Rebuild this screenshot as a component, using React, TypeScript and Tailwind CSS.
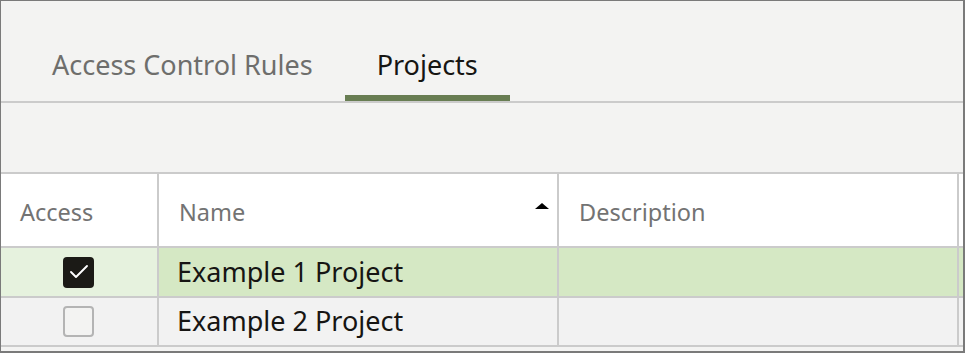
import { Check } from "lucide-react";

const rows = [
  { id: 1, name: "Example 1 Project", description: "", access: true },
  { id: 2, name: "Example 2 Project", description: "", access: false },
];

const tabs = [
  { id: "rules", label: "Access Control Rules", active: false },
  { id: "projects", label: "Projects", active: true },
];

export default function App() {
  return (
    <main
      className="w-[965px] h-[353px] bg-[#f3f3f2] border-t border-l border-r-2 border-b-2 border-[#7a7a7a] flex flex-col overflow-hidden"
      style={{ fontFamily: '"Noto Sans", "Open Sans", sans-serif' }}
    >
      {/* TABS */}
      <div className="h-[102px] shrink-0 flex pl-[19px] border-b-2 border-[#cbcbcb]">
        {tabs.map((t) => (
          <div key={t.id} className="h-full flex flex-col">
            <div
              className={
                "flex-1 px-8 pt-[46px] text-[27px] leading-[36px] " +
                (t.active ? "text-[#161513]" : "text-[#6e6e6c]")
              }
            >
              {t.label}
            </div>
            <div className={"h-[6px] " + (t.active ? "bg-[#687d53]" : "")} />
          </div>
        ))}
      </div>

      {/* TOOLBAR */}
      <div className="h-[69px] shrink-0" />

      {/* TABLE */}
      <div className="shrink-0 border-t-2 border-[#cbcbcb]">
        <div className="grid grid-cols-[158px_400px_400px_1fr] h-[74px] bg-white border-b-2 border-[#cbcbcb] text-[23.5px] text-[#737373]">
          <div className="flex items-center pl-[19px] pt-[6px] border-r-2 border-[#cbcbcb]">Access</div>
          <div className="relative flex items-center pl-[20px] pt-[6px] border-r-2 border-[#cbcbcb]">
            Name
            <span className="absolute right-[8px] top-[29px] w-0 h-0 border-l-[7px] border-r-[7px] border-b-[6px] border-l-transparent border-r-transparent border-b-black" />
          </div>
          <div className="flex items-center pl-[20px] pt-[6px] border-r-2 border-[#cbcbcb]">Description</div>
          <div />
        </div>

        {rows.map((r) => (
          <div
            key={r.id}
            className={
              "grid grid-cols-[158px_400px_400px_1fr] border-b-2 border-[#cbcbcb] text-[27px] text-[#161513] " +
              (r.access ? "h-[50px] bg-[#d5e8c4]" : "h-[49px] bg-[#f2f2f2]")
            }
          >
            <div
              className={
                "flex items-center justify-center pr-[1px] border-r-2 border-[#cbcbcb] " +
                (r.access ? "bg-[#e6f2de]" : "")
              }
            >
              {r.access ? (
                <span className="w-[31px] h-[31px] rounded-[4px] bg-[#1b1a16] flex items-center justify-center">
                  <Check className="w-[24px] h-[24px] text-white" strokeWidth={1.9} />
                </span>
              ) : (
                <span className="w-[31px] h-[31px] rounded-[4px] border-2 border-[#b4b4b4] bg-[#f3f3f2]" />
              )}
            </div>
            <div className="flex items-center pl-[18px] border-r-2 border-[#cbcbcb]">{r.name}</div>
            <div className="flex items-center pl-[20px] border-r-2 border-[#cbcbcb]">{r.description}</div>
            <div />
          </div>
        ))}
      </div>
    </main>
  );
}
